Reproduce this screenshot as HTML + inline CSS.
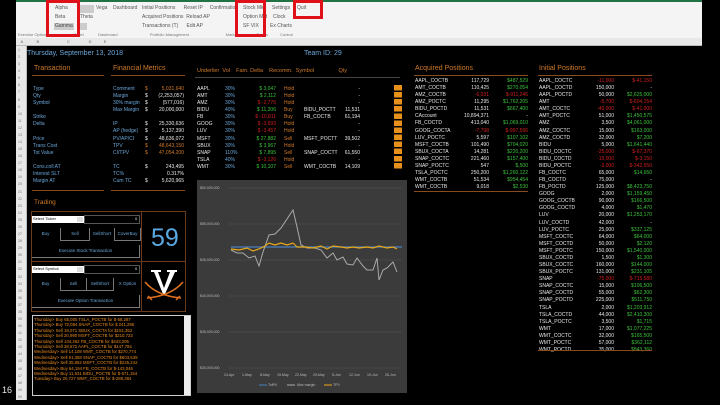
<!DOCTYPE html>
<html><head><style>
*{margin:0;padding:0;box-sizing:border-box}
body{width:720px;height:405px;background:#000;position:relative;overflow:hidden;font-family:"Liberation Sans",sans-serif;font-size:5px;color:#cfe0f0}
.a{position:absolute;white-space:nowrap;line-height:1}
.o{color:#d07a2a}.b{color:#6aa6d8}.g{color:#3cc33c}.r{color:#d02020}.w{color:#e8e8e8}.y{color:#f0a020}
.rt{text-align:right}
.ul{position:absolute;height:1px;background:#8a4a20}
.btn{position:absolute;border:1px solid #777;border-top:none;border-left:none;color:#6aa6d8;text-align:center;font-size:4.5px;line-height:11px}
</style></head><body>
<!-- ribbon -->
<div class="a" style="left:16px;top:0;width:686px;height:38px;background:#f4f4f4"></div>
<div class="a" style="left:16px;top:0;width:686px;height:2px;background:#217346"></div>
<div class="a" style="left:55px;top:6px;color:#555">Alpha</div>
<div class="a" style="left:55px;top:15px;color:#555">Beta</div>
<div class="a" style="left:54px;top:23px;width:20px;height:7px;background:#ccc;color:#444;padding:1px">Gamma</div>
<div class="a" style="left:80px;top:5px;width:14px;height:8px;background:#ccc"></div>
<div class="a" style="left:96px;top:6px;color:#555">Vega</div>
<div class="a" style="left:80px;top:15px;color:#555">Theta</div>
<div class="a" style="left:80px;top:23px;width:7px;height:7px;background:#ccc"></div>
<div class="a" style="left:113px;top:6px;color:#555">Dashboard</div>
<div class="a" style="left:142px;top:6px;color:#555">Initial Positions &nbsp;&nbsp;&nbsp;&nbsp;&nbsp;Reset IP &nbsp;&nbsp;&nbsp;&nbsp;Confirmation</div>
<div class="a" style="left:142px;top:15px;color:#555">Acquired Positions &nbsp;Reload AP</div>
<div class="a" style="left:142px;top:24px;color:#555">Transactions (T) &nbsp;&nbsp;&nbsp;&nbsp;&nbsp;Edit AP</div>
<div class="a" style="left:243px;top:6px;color:#555">Stock Mkt</div>
<div class="a" style="left:243px;top:15px;color:#555">Option Mkt</div>
<div class="a" style="left:243px;top:24px;color:#555">SF VIX</div>
<div class="a" style="left:272px;top:6px;color:#555">Settings</div>
<div class="a" style="left:273px;top:15px;color:#555">Clock</div>
<div class="a" style="left:270px;top:24px;color:#555">Ex Charts</div>
<div class="a" style="left:297px;top:6px;color:#555">Quit</div>
<div class="a" style="left:18px;top:33px;color:#777;font-size:4px">Exercise Options &nbsp;&nbsp;&nbsp;&nbsp;&nbsp;&nbsp;&nbsp;&nbsp;&nbsp;&nbsp;&nbsp;&nbsp;&nbsp;&nbsp;&nbsp;&nbsp;&nbsp;&nbsp;&nbsp;&nbsp;&nbsp;Model &nbsp;&nbsp;&nbsp;&nbsp;&nbsp;&nbsp;&nbsp;&nbsp;&nbsp;&nbsp;&nbsp;&nbsp;Dashboard &nbsp;&nbsp;&nbsp;&nbsp;&nbsp;&nbsp;&nbsp;&nbsp;&nbsp;&nbsp;&nbsp;&nbsp;&nbsp;&nbsp;&nbsp;&nbsp;&nbsp;&nbsp;&nbsp;&nbsp;&nbsp;&nbsp;&nbsp;&nbsp;&nbsp;&nbsp;&nbsp;&nbsp;Portfolio Management &nbsp;&nbsp;&nbsp;&nbsp;&nbsp;&nbsp;&nbsp;&nbsp;&nbsp;&nbsp;&nbsp;&nbsp;&nbsp;&nbsp;&nbsp;&nbsp;&nbsp;&nbsp;&nbsp;&nbsp;&nbsp;&nbsp;&nbsp;&nbsp;&nbsp;&nbsp;&nbsp;&nbsp;&nbsp;&nbsp;&nbsp;&nbsp;Markets &nbsp;&nbsp;&nbsp;&nbsp;&nbsp;&nbsp;&nbsp;&nbsp;&nbsp;&nbsp;&nbsp;&nbsp;&nbsp;&nbsp;Extras &nbsp;&nbsp;&nbsp;&nbsp;&nbsp;&nbsp;&nbsp;&nbsp;&nbsp;&nbsp;Control</div>
<div class="a" style="left:46px;top:0;width:34px;height:37px;border:3px solid #e0101a"></div>
<div class="a" style="left:235px;top:0;width:31px;height:37px;border:3px solid #e0101a"></div>
<div class="a" style="left:293px;top:0;width:30px;height:19px;border:3px solid #e0101a"></div>
<!-- column header -->
<div class="a" style="left:16px;top:38px;width:686px;height:8px;background:#e8e8e8;border-bottom:1px solid #bbb"></div>
<div class="a" style="left:16px;top:40px;color:#666;font-size:4px;word-spacing:0">&nbsp;&nbsp;&nbsp;&nbsp;A&nbsp;&nbsp;&nbsp;&nbsp;&nbsp;&nbsp;&nbsp;&nbsp;&nbsp;&nbsp;&nbsp;&nbsp;B&nbsp;&nbsp;&nbsp;&nbsp;&nbsp;&nbsp;&nbsp;&nbsp;&nbsp;&nbsp;&nbsp;&nbsp;&nbsp;&nbsp;&nbsp;&nbsp;&nbsp;&nbsp;&nbsp;&nbsp;&nbsp;&nbsp;&nbsp;&nbsp;&nbsp;C&nbsp;&nbsp;&nbsp;&nbsp;&nbsp;&nbsp;&nbsp;&nbsp;&nbsp;&nbsp;&nbsp;&nbsp;&nbsp;&nbsp;&nbsp;&nbsp;&nbsp;D&nbsp;&nbsp;&nbsp;&nbsp;&nbsp;&nbsp;&nbsp;&nbsp;&nbsp;&nbsp;&nbsp;E</div>
<!-- row numbers -->
<div class="a" style="left:16px;top:46px;width:11px;height:354px;background:#e8e8e8;border-right:1px solid #bbb"></div>
<div class="a" style="left:18px;top:47px;color:#777;font-size:3.5px;line-height:7.08px;white-space:pre">1
2
3
4
5
6
7
8
9
10
11
12
13
14
15
16
17
18
19
20
21
22
23
24
25
26
27
28
29
30
31
32
33
34
35
36
37
38
39
40
41
42
43
44
45
46
47
48
49
50</div>
<div class="a w" style="left:2px;top:386px;font-size:9px">16</div>

<!-- header -->
<div class="a b" style="left:27px;top:50px;font-size:7px">Thursday, September 13, 2018</div>
<div class="a b" style="left:304px;top:50px;font-size:7px">Team ID: 29</div>
<div class="a o" style="left:34px;top:65px;font-size:7px">Transaction</div>
<div class="ul" style="left:32px;top:75px;width:72px"></div>
<div class="a o" style="left:113px;top:65px;font-size:7px">Financial Metrics</div>
<div class="ul" style="left:111px;top:75px;width:74px"></div>

<div class="a b" style="left:33px;top:86px;line-height:7.08px;white-space:pre">Type
Qty
Symbol

Strike
Delta

Price
Trans Cost
Tot Value

Cons.coll AT
Interest SLT
Margin AT</div>
<div class="a b" style="left:113px;top:86px;line-height:7.08px;white-space:pre">Comment
Margin
30% margin
Max Margin

IP
AP (hedge)
PV/AP/CI
TPV
CI/TPV

TC
TC%
Cum TC</div>
<div class="a w" style="left:145px;top:86px;line-height:7.08px;white-space:pre"><span class="o">$</span>
$
$
$

$
$
$
<span class="o">$</span>
<span class="o">$</span>

$

$</div>
<div class="a w rt" style="left:140px;width:44px;top:86px;line-height:7.08px;white-space:pre"><span class="o">5,031,640</span>
(2,253,057)
(577,016)
20,000,000

25,330,636
5,137,390
48,636,072
<span class="o">48,643,150</span>
<span class="o">47,054,200</span>

243,495
0.317%
5,620,965</div>
<div class="ul" style="left:32px;top:190px;width:72px"></div>
<div class="ul" style="left:111px;top:190px;width:74px"></div>

<!-- underlier table -->
<div class="a o" style="left:197px;top:69px;font-size:5.5px;white-space:pre">Underlier  Vol    Fam. Delta    Recomm.  Symbol                Qty</div>
<div class="ul" style="left:195px;top:77px;width:205px;background:#444"></div>
<div class="a w" style="left:197px;top:86px;line-height:7.08px;white-space:pre">AAPL
AMT
AMZ
BIDU
FB
GOOG
LUV
MSFT
SBUX
SNAP
TSLA
WMT</div>
<div class="a b" style="left:225px;top:86px;line-height:7.08px;white-space:pre">30%
30%
30%
40%
30%
30%
30%
30%
30%
110%
40%
30%</div>
<div class="a rt" style="left:240px;width:36px;top:86px;line-height:7.08px;white-space:pre"><span class="g">$ 3,047</span>
<span class="g">$ 2,112</span>
<span class="r">$ -2,776</span>
<span class="g">$ 11,206</span>
<span class="r">$ -10,811</span>
<span class="r">$ -3,693</span>
<span class="r">$ -3,457</span>
<span class="g">$ 27,882</span>
<span class="g">$ 3,967</span>
<span class="g">$ 7,895</span>
<span class="r">$ -3,126</span>
<span class="g">$ 10,107</span></div>
<div class="a o" style="left:284px;top:86px;line-height:7.08px;white-space:pre">Hold
Hold
Hold
Buy
Buy
Hold
Hold
Sell
Hold
Sell
Hold
Sell</div>
<div class="a w" style="left:304px;top:86px;line-height:7.08px;white-space:pre">


BIDU_POCTT
FB_COCTB


MSFT_POCTT

SNAP_COCTT

WMT_COCTB</div>
<div class="a w rt" style="left:330px;width:30px;top:86px;line-height:7.08px;white-space:pre">-
-
-
11,531
61,194
-
-
39,502
-
61,550
-
14,109</div>
<div class="a" style="left:394px;top:85px;width:8px;height:85px;background:repeating-linear-gradient(#e8901c 0 5.5px,#000 5.5px 7.08px)"></div>

<!-- acquired -->
<div class="a o" style="left:415px;top:65px;font-size:7px">Acquired Positions</div>
<div class="ul" style="left:414px;top:75px;width:114px"></div>
<div class="a w" style="left:415px;top:78px;line-height:7.08px;white-space:pre">AAPL_COCTB
AMT_COCTB
AMZ_COCTB
AMZ_POCTC
BIDU_POCTD
CAccount
FB_COCTD
GOOG_COCTA
LUV_POCTC
MSFT_COCTB
SBUX_COCTA
SNAP_COCTC
SNAP_POCTC
TSLA_POCTC
WMT_COCTB
WMT_COCTB</div>
<div class="a w rt" style="left:450px;width:39px;top:78px;line-height:7.08px;white-space:pre">117,729
110,425
<span class="r">-6,031</span>
11,295
11,531
10,894,371
413,040
<span class="r">-7,798</span>
5,597
101,490
14,281
221,460
547
250,200
51,534
9,018</div>
<div class="a g rt" style="left:488px;width:40px;top:78px;line-height:7.08px;white-space:pre">$487,529
$270,054
<span class="r">$-911,246</span>
$1,762,205
$667,400
<span class="w">-</span>
$1,069,010
<span class="r">$-997,596</span>
$107,102
$704,020
$220,200
$157,400
$,500
$1,260,122
$954,454
$2,530</div>
<div class="ul" style="left:414px;top:191px;width:114px"></div>

<!-- initial -->
<div class="a o" style="left:539px;top:65px;font-size:7px">Initial Positions</div>
<div class="ul" style="left:538px;top:75px;width:114px"></div>
<div class="a w" style="left:539px;top:78px;line-height:7.08px;white-space:pre">AAPL_COCTC
AAPL_COCTD
AAPL_POCTD
AMT
AMT_COCTC
AMT_POCTC
AMZ
AMZ_COCTC
AMZ_COCTD
BIDU
BIDU_COCTC
BIDU_COCTD
BIDU_POCTC
FB_COCTC
FB_COCTD
FB_POCTD
GOOG
GOOG_COCTB
GOOG_COCTD
LUV
LUV_COCTD
LUV_POCTC
MSFT_COCTC
MSFT_COCTD
MSFT_POCTC
SBUX_COCTD
SBUX_COCTC
SBUX_POCTC
SNAP
SNAP_COCTC
SNAP_COCTD
SNAP_POCTD
TSLA
TSLA_COCTD
TSLA_POCTC
WMT
WMT_COCTC
WMT_POCTC
WMT_POCTD</div>
<div class="a w rt" style="left:575px;width:39px;top:78px;line-height:7.08px;white-space:pre"><span class="r">-11,000</span>
150,000
50,000
<span class="r">-5,700</span>
<span class="r">-40,000</span>
51,000
3,500
15,000
32,000
5,000
<span class="r">-25,000</span>
<span class="r">-15,000</span>
<span class="r">-3,000</span>
65,000
75,000
125,000
2,000
90,000
4,000
20,000
42,000
25,000
64,000
50,000
150,000
1,500
160,000
131,000
<span class="r">-75,000</span>
15,000
55,000
225,000
2,000
44,000
3,500
17,000
32,000
57,000
35,000</div>
<div class="a g rt" style="left:610px;width:42px;top:78px;line-height:7.08px;white-space:pre"><span class="r">$-41,150</span>
<span class="w">-</span>
$2,625,000
<span class="r">$-604,154</span>
<span class="r">$-41,000</span>
$1,450,575
$4,061,000
$163,000
$7,200
$1,641,440
<span class="r">$-67,370</span>
<span class="r">$-3,150</span>
<span class="r">$-342,550</span>
$14,650
<span class="w">-</span>
$8,423,750
$1,159,450
$166,500
$1,470
$1,253,170
<span class="w">-</span>
$337,125
$64,000
$2,120
$1,540,000
$1,300
$144,000
$231,105
<span class="r">$-715,580</span>
$106,500
$62,300
$511,750
$1,203,912
$2,410,300
$1,715
$1,077,225
$165,500
$362,112
$843,360</div>
<div class="ul" style="left:538px;top:350px;width:114px"></div>

<!-- trading -->
<div class="a o" style="left:34px;top:200px;font-size:6.5px">Trading</div>
<div class="a" style="left:31px;top:211px;width:155px;height:101px;border:1px solid #6a3a1c"></div>
<div class="a" style="left:141px;top:211px;width:1px;height:101px;background:#6a3a1c"></div>
<div class="a" style="left:31px;top:261px;width:155px;height:1px;background:#6a3a1c"></div>
<div class="a" style="left:32px;top:216px;width:52px;height:7px;background:#fff;color:#000;font-size:4px;padding:1px">Select Ticker</div>
<div class="a" style="left:77px;top:217px;width:6px;height:5px;background:#ddd"></div>
<div class="a" style="left:84px;top:215px;width:56px;height:9px;border:1px solid #555"></div>
<div class="a w" style="left:135px;top:217px;font-size:4px">0</div>
<div class="btn" style="left:32px;top:228px;width:27px;height:13px;border:none">Buy</div>
<div class="btn" style="left:60px;top:228px;width:30px;height:13px;border-left:1px solid #777">Sell</div>
<div class="btn" style="left:90px;top:228px;width:24px;height:13px;border:none">SellShort</div>
<div class="btn" style="left:114px;top:228px;width:27px;height:13px;border-left:1px solid #777">CoverBuy</div>
<div class="btn" style="left:32px;top:245px;width:108px;height:13px">Execute Stock Transaction</div>
<div class="a" style="left:32px;top:266px;width:52px;height:7px;background:#fff;color:#000;font-size:4px;padding:1px">Select Symbol</div>
<div class="a" style="left:77px;top:267px;width:6px;height:5px;background:#ddd"></div>
<div class="a" style="left:84px;top:265px;width:56px;height:9px;border:1px solid #555"></div>
<div class="a w" style="left:135px;top:267px;font-size:4px">0</div>
<div class="btn" style="left:32px;top:278px;width:27px;height:13px;border:none">Buy</div>
<div class="btn" style="left:60px;top:278px;width:27px;height:13px;border-left:1px solid #777">Sell</div>
<div class="btn" style="left:87px;top:278px;width:27px;height:13px">SellShort</div>
<div class="btn" style="left:114px;top:278px;width:27px;height:13px;border:none">X Option</div>
<div class="btn" style="left:32px;top:295px;width:108px;height:13px">Execute Option Transaction</div>
<div class="a" style="left:151px;top:226px;font-size:25px;color:#5aa8e0">59</div>
<svg class="a" style="left:143px;top:268px" width="42" height="34" viewBox="0 0 42 34">
<path d="M8 2h10v2h-3l6 16 6-16h-3V2h10v2h-2L22 26h-2L11 4H8z" fill="#fff"/>
<path d="M2 14 Q14 28 38 30 M40 14 Q28 28 4 30" stroke="#e07020" stroke-width="1.6" fill="none"/>
<path d="M5 28l4 4M37 28l-4 4" stroke="#e07020" stroke-width="1.5"/>
</svg>

<!-- log -->
<div class="a" style="left:32px;top:315px;width:159px;height:81px;border:1px solid #ccc;background:#000"></div>
<div class="a" style="left:184px;top:316px;width:6px;height:79px;background:#eee"></div>
<div class="a" style="left:34px;top:317px;color:#e88a20;font-size:4.3px;line-height:5.4px;white-space:pre">Thursday> Buy 65,000 TSLA_POCTB for $-58,287
Thursday> Buy 72,084 SNAP_COCTB for $ 241,295
Thursday> Sell 18,071 SBUX_COCTA for $151,352
Thursday> Sell 20,990 MSFT_COCTB for $210,723
Thursday> Sell 134,262 FB_COCTB for $443,205
Thursday> Sell 38,672 AAPL_COCTB for $147,784
Wednesday> Sell 14,108 WMT_COCTB for $270,774
Wednesday> Sell 91,358 SNAP_COCTB for $603,539
Wednesday> Sell 35,852 MSFT_COCTB for $225,242
Wednesday> Buy 64,194 FB_COCTB for $-143,046
Wednesday> Buy 11,531 BIDU_POCTB for $-671,154
Tuesday> Buy 20,727 WMT_COCTB for $-288,384</div>

<!-- chart -->
<div class="a" style="left:197px;top:180px;width:210px;height:213px;background:#3b3b3b"></div>
<svg class="a" style="left:197px;top:180px" width="210" height="213" viewBox="0 0 210 213">
<g stroke="#555" stroke-width="0.5"><line x1="32" y1="8" x2="205" y2="8"/><line x1="32" y1="44" x2="205" y2="44"/><line x1="32" y1="80" x2="205" y2="80"/><line x1="32" y1="116" x2="205" y2="116"/><line x1="32" y1="152" x2="205" y2="152"/><line x1="32" y1="188" x2="205" y2="188"/></g>
<g fill="#bbb" font-size="3.5" font-family="Liberation Sans"><text x="3" y="9">$60,000,000</text><text x="3" y="45">$55,000,000</text><text x="3" y="81">$45,000,000</text><text x="3" y="117">$40,000,000</text><text x="3" y="153">$35,000,000</text><text x="3" y="189">$30,000,000</text>
<text x="27" y="196">24-Apr</text><text x="45" y="196">1-May</text><text x="63" y="196">8-May</text><text x="80" y="196">15-May</text><text x="98" y="196">22-May</text><text x="116" y="196">29-May</text><text x="135" y="196">5-Jun</text><text x="152" y="196">12-Jun</text><text x="170" y="196">19-Jun</text><text x="188" y="196">26-Jun</text>
<text x="71" y="206">TotPV</text><text x="100" y="206">Max margin</text><text x="136" y="206">TPV</text></g>
<line x1="34" y1="67" x2="205" y2="67" stroke="#4a80c0" stroke-width="1.2"/>
<polyline fill="none" stroke="#aaa" stroke-width="1" points="34,70 40,73 46,73 52,78 58,76 62,86 66,72 72,55 78,54 84,48 90,39 96,30 100,47 104,65 110,68 118,68 124,70 130,78 136,73 140,80 146,77 150,84 156,85 160,78 166,86 170,90 176,90 180,78 182,100 186,90 190,88 196,82 200,92"/>
<polyline fill="none" stroke="#e8a818" stroke-width="1.2" points="34,69 42,70 50,68 56,71 62,69 68,66 72,63 78,65 84,63 90,65 96,63 100,67 108,67 116,68 124,66 130,69 136,66 144,67 150,68 156,67 162,68 170,67 176,68 182,66 190,68 196,67 200,69"/>
<line x1="62" y1="205" x2="70" y2="205" stroke="#4a80c0"/><line x1="90" y1="205" x2="98" y2="205" stroke="#aaa"/><line x1="127" y1="205" x2="135" y2="205" stroke="#e8a818"/>
</svg>
</body></html>
